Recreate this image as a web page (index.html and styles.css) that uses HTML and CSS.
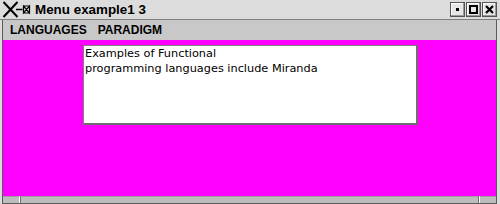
FILE: index.html
```html
<!DOCTYPE html>
<html>
<head>
<meta charset="utf-8">
<link rel="stylesheet" href="styles.css">
</head>
<body>
<div class="window">
  <div class="titlebar">
    <svg class="logo" width="30" height="17" viewBox="0 0 30 17">
      <path d="M1.5 1 L15.5 16 M15.5 1 L1.5 16" stroke="#000" stroke-width="2" fill="none"/>
      <path d="M14 8.5 H20.5" stroke="#000" stroke-width="1.5"/>
      <path d="M21.5 5 L21.5 12 L27.5 5 L27.5 12 Z M21.5 5 H27.5 M21.5 12 H27.5" stroke="#000" stroke-width="1.2" fill="none"/>
    </svg>
    <span class="title">Menu example1 3</span>
    <div class="buttons">
      <div class="btn"><svg width="13" height="13" viewBox="0 0 13 13"><rect x="5" y="5" width="3" height="3" fill="#000"/></svg></div>
      <div class="btn"><svg width="13" height="13" viewBox="0 0 13 13"><rect x="3" y="3" width="7" height="7" fill="none" stroke="#000" stroke-width="2"/></svg></div>
      <div class="btn"><svg width="13" height="13" viewBox="0 0 13 13"><path d="M3 3 L10 10 M10 3 L3 10" stroke="#000" stroke-width="2.2"/></svg></div>
    </div>
  </div>
  <div class="frame">
    <div class="menubar">
      <span class="menu">LANGUAGES</span>
      <span class="menu">PARADIGM</span>
    </div>
    <div class="content">
      <div class="textbox">Examples of Functional<br>programming languages include Miranda</div>
    </div>
    <div class="status">
      <div class="cell first"></div>
      <div class="cell mid"></div>
      <div class="cell last"></div>
    </div>
  </div>
</div>
</body>
</html>
```
FILE: styles.css
```css
html, body {
  margin: 0;
  padding: 0;
}
body {
  width: 500px;
  height: 204px;
  overflow: hidden;
  font-family: "Liberation Sans", Arial, sans-serif;
}
.window {
  width: 500px;
  height: 204px;
  display: flex;
  flex-direction: column;
  background: #dcdcdc;
}
.titlebar {
  height: 19px;
  display: flex;
  align-items: center;
  background: #dcdcdc;
  border-bottom: 1px solid #808080;
  box-sizing: content-box;
}
.logo {
  margin-left: 2px;
  flex: none;
}
.title {
  margin-left: 3px;
  font-weight: bold;
  font-size: 13.4px;
  color: #000;
}
.buttons {
  margin-left: auto;
  margin-right: 3px;
  display: flex;
  gap: 1px;
}
.btn {
  width: 13px;
  height: 13px;
  border: 1px solid #555;
  background: #e6e6e6;
  box-shadow: inset -1px -1px 0 #9a9a9a, inset 1px 1px 0 #fff;
  display: flex;
}
.frame {
  flex: 1;
  display: flex;
  flex-direction: column;
  margin-left: 2px;
  margin-right: 3px;
  border-left: 1px solid #5a5a5a;
  border-right: 1px solid #5a5a5a;
  border-bottom: 1px solid #5a5a5a;
}
.menubar {
  height: 20px;
  display: flex;
  align-items: center;
  background: #c8c8c8;
  padding-left: 7px;
  gap: 11px;
}
.menu {
  font-weight: bold;
  font-size: 12px;
  color: #000;
}
.content {
  height: 156px;
  background: #ff00ff;
  padding: 5px 0 0 80px;
  box-sizing: border-box;
}
.textbox {
  width: 331px;
  height: 77px;
  background: #fff;
  border-top: 1px solid #808080;
  border-left: 1px solid #808080;
  border-right: 2px solid #6e6e6e;
  border-bottom: 2px solid #6e6e6e;
  font-family: "DejaVu Sans", sans-serif;
  font-size: 11.3px;
  line-height: 15px;
  padding: 0 0 0 1px;
  color: #000;
}
.status {
  flex: 1;
  display: flex;
  background: #bdbdbd;
}
.cell {
  border-top: 1px solid #a0a0a0;
}
.first {
  width: 16px;
  border-right: 1px solid #fff;
}
.mid {
  flex: 1;
  border-left: 1px solid #6e6e6e;
  border-right: 1px solid #6e6e6e;
}
.last {
  width: 16px;
  border-left: 1px solid #fff;
}
```
